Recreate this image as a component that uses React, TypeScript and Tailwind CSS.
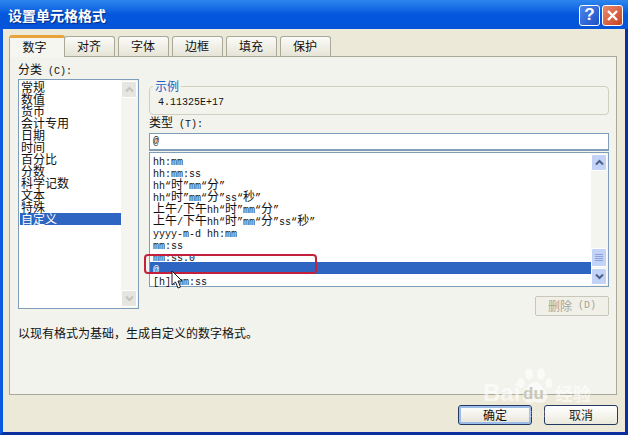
const categories = ["常规", "数值", "货币", "会计专用", "日期", "时间", "百分比", "分数", "科学记数", "文本", "特殊", "自定义"];

const formats = [
  "hh:mm",
  "hh:mm:ss",
  "hh“时”mm“分”",
  "hh“时”mm“分”ss“秒”",
  "上午/下午hh“时”mm“分”",
  "上午/下午hh“时”mm“分”ss“秒”",
  "yyyy-m-d hh:mm",
  "mm:ss",
  "mm:ss.0",
  "@",
  "[h]:mm:ss",
];

const tabs = ["对齐", "字体", "边框", "填充", "保护"];

// latin glyphs are half width in the original font, 10px mono gives the same 6px advance
const Mixed = ({ text }: { text: string }) => (
  <>
    {text.split(/([\u4e00-\u9fff]+)/).map((part, i) =>
      /[\u4e00-\u9fff]/.test(part) ? (
        <span key={i} className="text-[12px]">{part}</span>
      ) : (
        <span key={i} className="font-['Liberation_Mono',monospace] text-[10px] whitespace-pre">{part}</span>
      )
    )}
  </>
);

const Arrow = ({ dir, color = "#4d6185" }: { dir: "up" | "down"; color?: string }) => (
  <svg width="9" height="7" viewBox="0 0 9 7">
    <path d={dir === "up" ? "M1 5.5 4.5 2 8 5.5" : "M1 1.5 4.5 5 8 1.5"} fill="none" stroke={color} strokeWidth="2" />
  </svg>
);

const ScrollButton = ({ dir }: { dir: "up" | "down" }) => (
  <div className="flex h-[17px] w-[16px] items-center justify-center rounded-[2px] border border-white bg-[#c3d3f8]">
    <Arrow dir={dir} />
  </div>
);

const DisabledButton = ({ dir }: { dir: "up" | "down" }) => (
  <div className="flex h-[17px] w-[16px] items-center justify-center rounded-[2px] border border-white bg-[#e6e6e0]">
    <Arrow dir={dir} color="#c4c4ba" />
  </div>
);

const Paw = () => (
  <svg width="36" height="36" viewBox="0 0 36 36" fill="#ffffff" fillOpacity="0.6">
    <ellipse cx="12" cy="6" rx="4" ry="5.5" />
    <ellipse cx="24" cy="6" rx="4" ry="5.5" />
    <ellipse cx="4" cy="15" rx="3.5" ry="5" />
    <ellipse cx="32" cy="15" rx="3.5" ry="5" />
    <path d="M18 14c-5 0-6 4-10 8-4 4-3 13 4 13 3 0 4-1 6-1s3 1 6 1c7 0 8-9 4-13-4-4-5-8-10-8z" />
  </svg>
);

export default function App() {
  return (
    <div className="relative flex h-[435px] w-[628px] flex-col overflow-hidden bg-[#0831d9] font-['Noto_Sans_CJK_SC','Liberation_Sans',sans-serif] text-[12px] leading-[12px] text-[#111111]">
      {/* title bar */}
      <div className="flex h-[29px] shrink-0 items-center justify-between bg-gradient-to-b from-[#2d86ee] via-[#0457de] to-[#0553d8] pl-[8px] pr-[5px] pt-[1px]">
        <span className="text-[14px] font-bold leading-[14px] text-white [text-shadow:1px_1px_1px_#0a2a80]">设置单元格格式</span>
        <div className="flex gap-[2px]">
          <div className="flex h-[21px] w-[21px] items-center justify-center rounded-[3px] border border-white bg-gradient-to-br from-[#4f86ea] to-[#1d4fc8] font-['Liberation_Sans',sans-serif] text-[17px] font-bold text-white">?</div>
          <div className="flex h-[21px] w-[21px] items-center justify-center rounded-[3px] border border-white bg-gradient-to-br from-[#e9896b] to-[#c9401c]">
            <svg width="13" height="13" viewBox="0 0 13 13">
              <path d="M2 2 11 11M11 2 2 11" stroke="#ffffff" strokeWidth="2.4" />
            </svg>
          </div>
        </div>
      </div>

      {/* dialog body */}
      <div className="flex flex-1 flex-col border-b-[3px] border-l-[3px] border-r-[3px] border-b-[#0b2fa0] border-l-[#0a5ae0] border-r-[#0b2fa0] bg-[#ece9d8] px-[6px]">
        {/* tabs */}
        <div className="flex h-[27px] items-end">
          <div className="z-10 -mb-[1px] flex h-[22px] w-[56px] items-center justify-center rounded-t-[3px] border-x border-[#a9a899] border-t-[3px] border-t-[#e8a33a] bg-[#f6f6f1] pb-[2px] pr-[5px] text-[12px]">数字</div>
          <div className="-ml-[1px] flex gap-[3px]">
            {tabs.map((tab) => (
              <div key={tab} className="flex h-[20px] w-[51px] items-center justify-center rounded-t-[3px] border-x border-t border-[#a9a899] bg-gradient-to-b from-[#fbfbf8] to-[#e6e4d6] pb-[1px] pr-[1px] text-[12px]">
                {tab}
              </div>
            ))}
          </div>
        </div>

        {/* panel */}
        <div className="flex h-[339px] w-[608px] flex-col border border-[#a9a899] bg-[#f3f3ee] pl-[8px]">
          <div className="flex gap-[10px]">
            <div className="w-[121px] pt-[5px]">
              <div className="h-[14px] text-[12px] leading-[14px]">
                <Mixed text="分类 (C):" />
              </div>
              <div className="mt-[3px] flex h-[230px] justify-between border border-[#7f9db9] bg-white">
                <ul className="w-[102px] pl-[1px] pt-[1px]">
                  {categories.map((c) => (
                    <li key={c} className={c === "自定义" ? "h-[12px] bg-[#2f65c2] pl-[1px] text-white" : "h-[12px] pl-[1px]"}>
                      {c}
                    </li>
                  ))}
                </ul>
                <div className="flex w-[17px] flex-col justify-between bg-[#f5f5f0] py-[1px]">
                  <DisabledButton dir="up" />
                  <DisabledButton dir="down" />
                </div>
              </div>
            </div>

            <div className="w-[460px] pt-[22px]">
              <fieldset className="h-[36px] rounded-[4px] border border-[#d0d0bf] pl-[8px]">
                <legend className="-ml-[5px] px-[2px] text-[12px] leading-[14px] text-[#1d5ec4]">示例</legend>
                <div className="pt-[4px] font-['Liberation_Mono',monospace] text-[10px] leading-[12px]">4.11325E+17</div>
              </fieldset>
              <div className="h-[14px] leading-[14px]">
                <Mixed text="类型 (T):" />
              </div>
              <div className="mt-[4px] flex h-[18px] items-center border border-b-2 border-[#7f9db9] bg-white pl-[3px] font-['Liberation_Mono',monospace] text-[10px]">@</div>
              <div className="mt-[1px] flex h-[135px] justify-between border border-[#7f9db9] bg-white">
                <ul className="flex-1 pt-[1px]">
                  {formats.map((f) => (
                    <li key={f} className={f === "@" ? "h-[12px] bg-[#2f65c2] pl-[3px] leading-[12px] text-white" : "h-[12px] pl-[3px] leading-[12px]"}>
                      <Mixed text={f} />
                    </li>
                  ))}
                </ul>
                <div className="flex w-[17px] flex-col bg-[#f5f5f0] py-[1px]">
                  <ScrollButton dir="up" />
                  <div className="flex-1" />
                  <div className="flex h-[19px] w-[16px] flex-col items-center justify-center gap-[1px] rounded-[2px] border border-white bg-[#c3d3f8]">
                    <div className="h-px w-[8px] bg-[#8ea4d8]" />
                    <div className="h-px w-[8px] bg-[#8ea4d8]" />
                    <div className="h-px w-[8px] bg-[#8ea4d8]" />
                    <div className="h-px w-[8px] bg-[#8ea4d8]" />
                  </div>
                  <div className="h-[1px]" />
                  <ScrollButton dir="down" />
                </div>
              </div>
              <div className="mt-[9px] flex justify-end">
                <div className="flex h-[20px] w-[74px] items-center justify-center rounded-[2px] border border-[#c9c7ba] bg-[#f1f0e8] text-[#a6a594]">
                  <Mixed text="删除 (D)" />
                </div>
              </div>
            </div>
          </div>
          <div className="mt-[10px] leading-[14px]">以现有格式为基础，生成自定义的数字格式。</div>
        </div>

        {/* footer buttons */}
        <div className="flex justify-end gap-[12px] pr-[1px] pt-[10px]">
          <div className="flex h-[20px] w-[74px] items-center justify-center rounded-[3px] border border-[#23395f] bg-gradient-to-b from-white to-[#e6e3d6] shadow-[inset_0_0_0_2px_#9dbce8]">确定</div>
          <div className="flex h-[20px] w-[74px] items-center justify-center rounded-[3px] border border-[#23395f] bg-gradient-to-b from-white to-[#ebe9dc]">取消</div>
        </div>
      </div>

      {/* red annotation */}
      <div className="absolute left-[144px] top-[254px] h-[20px] w-[173px] rounded-[4px] border-2 border-[#c4203c]" />

      {/* mouse cursor */}
      <svg className="absolute left-[171px] top-[270px]" width="14" height="20" viewBox="0 0 14 20">
        <path d="M1 1v14l3.5-3 2.5 6 2.5-1-2.5-6H11z" fill="#ffffff" stroke="#1a1a1a" strokeWidth="1" />
      </svg>

      {/* baidu watermark */}
      <div className="absolute left-[483px] top-[368px] flex h-[36px] items-end font-['Liberation_Sans',sans-serif] text-[24px] font-bold leading-[22px] text-white/60">
        <span className="w-[34px]">Bai</span>
        <div className="relative">
          <Paw />
          <span className="absolute bottom-[1px] left-[6px] text-[17px] leading-[18px] text-[#c9c7b8]">du</span>
        </div>
        <span className="ml-[2px] font-['Noto_Sans_CJK_SC',sans-serif] text-[18px] leading-[22px]">经验</span>
      </div>
      <div className="absolute left-[508px] top-[408px] font-['Liberation_Sans',sans-serif] text-[10px] leading-[12px] text-white/40">jingyan.baidu.com</div>
    </div>
  );
}
